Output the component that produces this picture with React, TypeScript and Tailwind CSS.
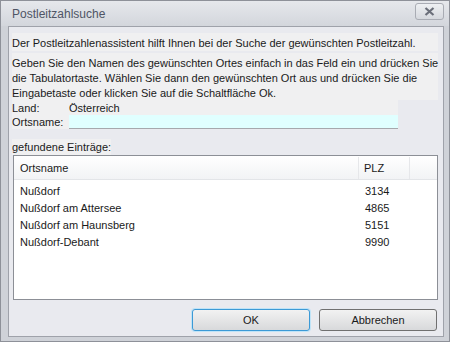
import React from 'react';

const rows = [
  { name: 'Nußdorf', plz: '3134' },
  { name: 'Nußdorf am Attersee', plz: '4865' },
  { name: 'Nußdorf am Haunsberg', plz: '5151' },
  { name: 'Nußdorf-Debant', plz: '9990' },
];

export default function App() {
  return (
    <div className="w-[450px] h-[342px] flex flex-col bg-[#cfd2d8] border border-[#8e9199] text-[11px] text-[#1a1a1a] font-['Liberation_Sans',sans-serif] whitespace-nowrap">
      {/* title bar */}
      <div className="h-[25px] flex items-center justify-between pl-[11px] pr-[5px] bg-gradient-to-b from-[#e6e8ec] to-[#d3d6dc]">
        <span className="text-[12px] text-[#4f5565] pt-[1px]">Postleitzahlsuche</span>
        <button className="w-[29px] h-[17px] -mt-[4px] flex items-center justify-center rounded-[3px] border border-[#a9acb4] bg-gradient-to-b from-[#eef0f3] to-[#d6d9de]">
          <svg width="11" height="9" viewBox="0 0 11 9">
            <path d="M1.5 1 L9.5 8 M9.5 1 L1.5 8" stroke="#6b6f7a" strokeWidth="2.2" />
          </svg>
        </button>
      </div>

      {/* client */}
      <div className="flex-1 ml-[7px] mr-[5px] mb-[4px] border border-[#9fa2aa] bg-[#e9eaef] flex flex-col pl-[3px] pr-[5px] pt-[6px]">
        <div className="bg-[#f0f0f1] h-[18px] pt-[3px] leading-[14px]">
          Der Postleitzahlenassistent hilft Ihnen bei der Suche der gewünschten Postleitzahl.
        </div>
        <div className="bg-[#f0f0f1] mt-[2px] h-[47px] pt-[3px] leading-[15px]">
          Geben Sie den Namen des gewünschten Ortes einfach in das Feld ein und drücken Sie
          <br />
          die Tabulatortaste. Wählen Sie dann den gewünschten Ort aus und drücken Sie die
          <br />
          Eingabetaste oder klicken Sie auf die Schaltfläche Ok.
        </div>
        <div className="w-[386px] bg-[#f0f0f1] h-[15px] flex items-center pt-[1px]">
          <span className="w-[57px]">Land:</span>
          <span>Österreich</span>
        </div>
        <div className="w-[386px] bg-[#f0f0f1] h-[14px] flex items-center">
          <span className="w-[57px]">Ortsname:</span>
          <div className="flex-1 h-[14px] bg-[#e0ffff] border-b border-[#a6a8ad]" />
        </div>

        <div className="mt-[11px] h-[14px] flex items-center">
          <span className="bg-[#f0f0f1]">gefundene Einträge:</span>
        </div>

        <div className="mt-[1px] ml-[1px] h-[145px] border border-[#8c8f96] bg-white flex flex-col">
          <div className="h-[24px] flex bg-gradient-to-b from-white to-[#f2f3f5] border-b border-[#e3e5e8] pt-[1px]">
            <div className="w-[345px] pl-[6px] flex items-center border-r border-[#e6e7ea]">Ortsname</div>
            <div className="w-[51px] pl-[5px] flex items-center border-r border-[#e6e7ea]">PLZ</div>
            <div className="flex-1" />
          </div>
          <div className="pt-[2px]">
            {rows.map((r) => (
              <div key={r.plz} className="h-[17px] flex items-center pt-[1px]">
                <span className="w-[345px] pl-[6px]">{r.name}</span>
                <span className="pl-[6px]">{r.plz}</span>
              </div>
            ))}
          </div>
        </div>

        <div className="flex justify-end gap-[9px] mt-[9px] pr-[1px]">
          <button className="w-[118px] h-[22px] rounded-[3px] border border-[#3c9ad6] shadow-[0_0_0_1px_#bfe3f7] bg-gradient-to-b from-[#f2f2f2] to-[#d8d9db]">
            OK
          </button>
          <button className="w-[118px] h-[22px] rounded-[3px] border border-[#707070] bg-gradient-to-b from-[#f2f2f2] to-[#d8d9db]">
            Abbrechen
          </button>
        </div>
      </div>
    </div>
  );
}
